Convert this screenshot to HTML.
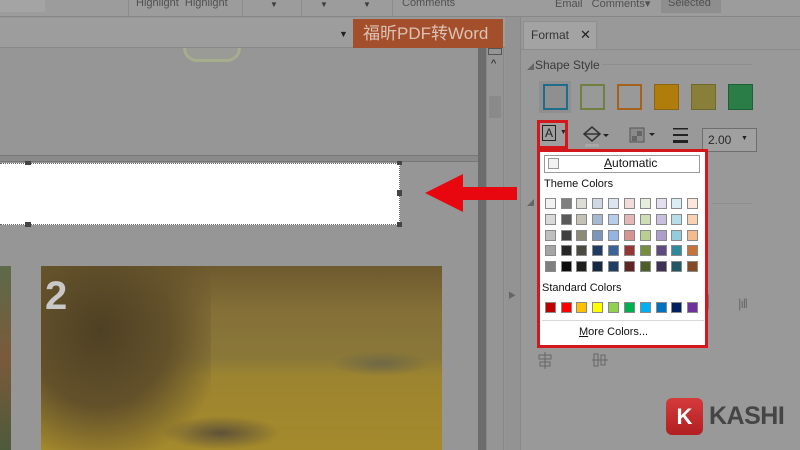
<!DOCTYPE html>
<html><head><meta charset="utf-8"><style>
*{margin:0;padding:0;box-sizing:border-box}
body{width:800px;height:450px;overflow:hidden;background:#969696;font-family:"Liberation Sans","Noto Sans CJK SC",sans-serif;position:relative;color:#3c3c3c}
.a{position:absolute}
.sw{position:absolute;width:11px;height:11px;border:1px solid #8a8a8a}
</style></head><body>
<div class="a" style="left:0;top:0;width:800px;height:17px;background:#9c9c9c;border-bottom:1px solid #878787"></div>
<div class="a" style="left:0;top:0;width:45px;height:12px;background:#a4a4a4"></div>
<div class="a" style="left:128px;top:0;height:16px;border-left:1px solid #8c8c8c"></div>
<div class="a" style="left:242px;top:0;height:16px;border-left:1px solid #8c8c8c"></div>
<div class="a" style="left:301px;top:0;height:16px;border-left:1px solid #8c8c8c"></div>
<div class="a" style="left:392px;top:0;height:16px;border-left:1px solid #8c8c8c"></div>
<div class="a" style="left:136px;top:-3px;font-size:11px;color:#505050">Highlight&nbsp;&nbsp;Highlight</div>
<div class="a" style="left:402px;top:-3px;font-size:11px;color:#505050">Comments</div>
<div class="a" style="left:555px;top:-3px;font-size:11px;color:#505050">Email&nbsp;&nbsp;&nbsp;Comments▾</div>
<div class="a" style="left:661px;top:0;width:60px;height:13px;background:#8e8e8e"></div>
<div class="a" style="left:668px;top:-3px;font-size:11px;color:#505050">Selected</div>
<div class="a" style="left:270px;top:0;font-size:8px">▼</div>
<div class="a" style="left:320px;top:0;font-size:8px">▼</div>
<div class="a" style="left:363px;top:0;font-size:8px">▼</div>
<div class="a" style="left:0;top:18px;width:505px;height:30px;background:#9d9d9d;border-bottom:1px solid #888"></div>
<div class="a" style="left:339px;top:29px;font-size:9px;color:#222">▼</div>
<div class="a" style="left:353px;top:19px;width:150px;height:29px;background:#a44f2c;color:#dcc2b4;font-size:17px;line-height:29px;padding-left:10px">福昕PDF转Word</div>
<div class="a" style="left:183px;top:48px;width:58px;height:14px;border-radius:0 0 30px 30px;border:3px solid #a5ad8c;border-top:none;background:#9a9a96"></div>
<div class="a" style="left:0;top:155px;width:480px;height:7px;background:#8a8a8a;border-top:1px solid #777;border-bottom:1px solid #777"></div>
<div class="a" style="left:478px;top:48px;width:8px;height:402px;background:#6c6c6c"></div>
<div class="a" style="left:486px;top:48px;width:18px;height:402px;background:#959595;border-left:1px solid #888;border-right:1px solid #888"></div>
<div class="a" style="left:488px;top:48px;width:14px;height:7px;border:1px solid #555"></div>
<div class="a" style="left:491px;top:58px;font-size:11px;color:#222">^</div>
<div class="a" style="left:489px;top:96px;width:12px;height:22px;background:#8a8a8a"></div>
<div class="a" style="left:505px;top:17px;width:16px;height:433px;background:#939393;border-right:1px solid #888"></div>
<div class="a" style="left:508px;top:290px;font-size:8px;color:#666">▶</div>
<div class="a" style="left:0;top:163px;width:400px;height:62px;background:#fff;border:1px dotted #666;border-left:none"></div>
<div class="a" style="left:25px;top:161px;width:6px;height:4px;background:#444"></div>
<div class="a" style="left:25px;top:222px;width:6px;height:5px;background:#444"></div>
<div class="a" style="left:397px;top:161px;width:5px;height:4px;background:#444"></div>
<div class="a" style="left:397px;top:190px;width:5px;height:6px;background:#444"></div>
<div class="a" style="left:397px;top:222px;width:5px;height:5px;background:#444"></div>
<svg class="a" style="left:425px;top:174px" width="92" height="40"><polygon points="0,19 38,0 38,13 92,13 92,26 38,26 38,38" fill="#e8070e"/></svg>
<div class="a" style="left:0;top:266px;width:11px;height:184px;background:linear-gradient(#5d6a4a,#7a5a3a,#4e5a3c)"></div>
<div class="a" style="left:41px;top:266px;width:401px;height:184px;overflow:hidden;background:linear-gradient(#6d5a2e 0%,#857038 25%,#8a7838 50%,#9c8430 60%,#a58a2c 100%)">
<div class="a" style="left:0;top:0;width:170px;height:184px;background:radial-gradient(ellipse at 35% 35%,#4e4024 0%,#63512a 45%,rgba(120,100,50,0) 80%)"></div>
<div class="a" style="left:290px;top:85px;width:100px;height:25px;background:radial-gradient(ellipse,#6f6846,rgba(0,0,0,0) 70%)"></div>
<div class="a" style="left:120px;top:150px;width:120px;height:34px;background:radial-gradient(ellipse,#5e5238,rgba(0,0,0,0) 70%)"></div>
<div class="a" style="left:4px;top:8px;font-size:40px;font-weight:bold;color:#c8c8c8">2</div>
</div>
<div class="a" style="left:521px;top:17px;width:279px;height:433px;background:#999"></div>
<div class="a" style="left:523px;top:21px;width:74px;height:28px;background:#a3a3a3;border:1px solid #8e8e8e;border-bottom:none"></div>
<div class="a" style="left:531px;top:28px;font-size:12px;color:#333">Format</div>
<div class="a" style="left:580px;top:27px;font-size:13px;color:#222">✕</div>
<div class="a" style="left:521px;top:49px;width:279px;height:1px;background:#8c8c8c"></div>
<div class="a" style="left:527px;top:62px;font-size:7px;color:#666">◢</div>
<div class="a" style="left:535px;top:58px;font-size:12px;color:#3a3a3a">Shape Style</div>
<div class="a" style="left:602px;top:64px;width:150px;height:1px;background:#8e8e8e"></div>
<div class="a" style="left:539px;top:81px;width:32px;height:32px;background:#8f8f8f"></div>
<div class="a" style="left:543px;top:84px;width:25px;height:26px;border:2px solid #1f6d8c"></div>
<div class="a" style="left:580px;top:84px;width:25px;height:26px;border:2px solid #708040"></div>
<div class="a" style="left:617px;top:84px;width:25px;height:26px;border:2px solid #a6621d"></div>
<div class="a" style="left:654px;top:84px;width:25px;height:26px;background:#b07d0c;border:1px solid #8b6510"></div>
<div class="a" style="left:691px;top:84px;width:25px;height:26px;background:#88803a;border:1px solid #6d6a2c"></div>
<div class="a" style="left:728px;top:84px;width:25px;height:26px;background:#2a7d46;border:1px solid #1e6035"></div>
<div class="a" style="left:537px;top:120px;width:31px;height:29px;border:3px solid #d3181d;background:#9f9f9f"></div>
<div class="a" style="left:542px;top:125px;width:14px;height:16px;border:1px solid #222;font-size:12px;line-height:14px;text-align:center;color:#222">A</div>
<div class="a" style="left:560px;top:129px;font-size:7px;color:#222">▼</div>
<svg class="a" style="left:582px;top:124px" width="30" height="24"><path d="M2 10 L10 3 L18 10 L10 17 Z M2 10 H18" fill="none" stroke="#333" stroke-width="1.5"/><path d="M21 10 l3 3 3-3z" fill="#222"/><rect x="3" y="20" width="14" height="3" fill="#a8a8a8"/></svg>
<svg class="a" style="left:629px;top:127px" width="30" height="18"><rect x="1" y="1" width="14" height="14" fill="#8a8a8a" stroke="#555"/><rect x="8" y="4" width="5" height="5" fill="#666"/><rect x="3" y="9" width="5" height="5" fill="#666"/><path d="M20 6 l3 3 3-3z" fill="#222"/></svg>
<svg class="a" style="left:672px;top:126px" width="18" height="18"><rect x="1" y="2" width="15" height="1.5" fill="#222"/><rect x="1" y="8" width="15" height="2" fill="#222"/><rect x="1" y="14" width="15" height="3" fill="#222"/></svg>
<div class="a" style="left:702px;top:128px;width:55px;height:24px;border:1px solid #6e6e6e;background:#a0a0a0;font-size:12px;line-height:22px;padding-left:5px;color:#2a2a2a">2.00</div>
<div class="a" style="left:741px;top:135px;font-size:7px;color:#222">▼</div>
<div class="a" style="left:527px;top:198px;font-size:7px;color:#666">◢</div>
<div class="a" style="left:712px;top:203px;width:40px;height:1px;background:#8e8e8e"></div>
<div class="a" style="left:706px;top:293px;font-size:16px;color:#6a6a6a">|</div>
<div class="a" style="left:738px;top:296px;font-size:13px;color:#6a6a6a;letter-spacing:-1px">|ıll</div>
<svg class="a" style="left:537px;top:351px" width="80" height="20"><g fill="none" stroke="#666"><rect x="2" y="4" width="12" height="4"/><rect x="3" y="11" width="10" height="4"/><path d="M8 1v17"/><rect x="57" y="3" width="4" height="12"/><rect x="64" y="4" width="4" height="10"/><path d="M55 9h16"/></g></svg>
<div class="a" style="left:537px;top:149px;width:171px;height:199px;background:#fff;border:3px solid #d3181d"></div>
<div class="a" style="left:544px;top:155px;width:156px;height:18px;border:1px solid #9a9a9a"></div>
<div class="a" style="left:548px;top:158px;width:11px;height:11px;border:1px solid #999;background:#f2f2f2"></div>
<div class="a" style="left:604px;top:156px;font-size:12px;color:#111"><u>A</u>utomatic</div>
<div class="a" style="left:544px;top:178px;font-size:11px;color:#111">Theme Colors</div>
<div id="g"></div>
<div class="a" style="left:542px;top:282px;font-size:11px;color:#111">Standard Colors</div>
<div class="a" style="left:542px;top:320px;width:162px;height:1px;background:#d8d8d8"></div>
<div class="a" style="left:579px;top:326px;font-size:11px;color:#111"><u>M</u>ore Colors...</div>
<div class="a" style="left:666px;top:398px;width:37px;height:37px;border-radius:6px;background:linear-gradient(#d63a3a,#b11f22);color:#fff;font-size:22px;font-weight:bold;text-align:center;line-height:37px">K</div>
<div class="a" style="left:709px;top:402px;font-size:25px;font-weight:bold;color:#454545;letter-spacing:-0.5px">KASHI</div>
<script>
var cols=[550,566,581,597,613,629,645,661,676,692],rows=[203,219,235,250,266];
var t=[["#f2f2f2","#7f7f7f","#dcdcd4","#d0d8e4","#dbe6f3","#f1dcdc","#e6eedb","#e3dfee","#daeef3","#fbe8dc"],
["#d9d9d9","#595959","#c4c2b6","#a7b8cf","#b8cdeb","#e3b9b8","#cfdeb6","#c8c0dc","#b7dde8","#f9d1b3"],
["#bfbfbf","#3f3f3f","#8c8a78","#7c96b8","#94b4e2","#d69593","#b7cf92","#ac9fcb","#92cddd","#f6bb8d"],
["#a5a5a5","#262626","#4a4a40","#1f3b63","#3a6399","#943636","#768e3e","#5f4b80","#2f8a9e","#c77238"],
["#7f7f7f","#0c0c0c","#1e1e1a","#152941","#203e64","#622423","#4e5e28","#3e3254","#205867","#844b22"]];
var s=["#c00000","#ff0000","#ffc000","#ffff00","#92d050","#00b050","#00b0f0","#0070c0","#002060","#7030a0"];
var h="";
for(var r=0;r<5;r++)for(var c=0;c<10;c++)h+='<div class="sw" style="left:'+(cols[c]-5)+'px;top:'+(rows[r]-5)+'px;background:'+t[r][c]+'"></div>';
for(var c=0;c<10;c++)h+='<div class="sw" style="left:'+(cols[c]-5)+'px;top:302px;background:'+s[c]+'"></div>';
document.getElementById("g").innerHTML=h;
</script>
</body></html>
